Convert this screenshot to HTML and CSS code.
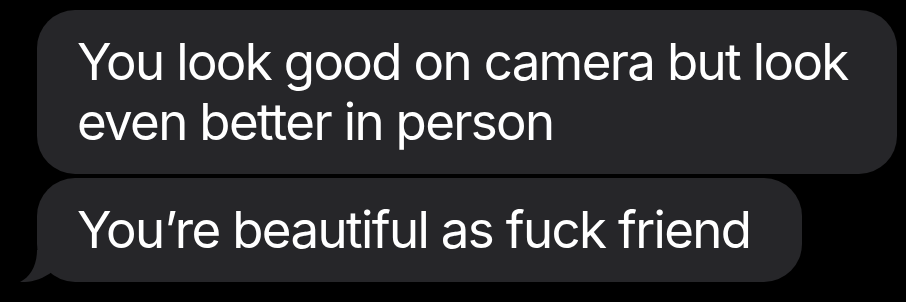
FILE: index.html
```html
<!DOCTYPE html>
<html>
<head>
<meta charset="utf-8">
<link rel="stylesheet" href="styles.css">
</head>
<body>
<div class="thread">
  <div class="bubble bubble-first">You look good on camera but look even better in person</div>
  <div class="bubble bubble-last">You’re beautiful as fuck friend<svg class="tail" width="40" height="32" viewBox="0 0 40 32"><path d="M17 0 C17 16 10 27 0 32 C10 32.5 22 30 33 21 L33 0 Z" fill="#262629"/></svg></div>
</div>
</body>
</html>
```
FILE: styles.css
```css
html, body {
  margin: 0;
  padding: 0;
  background: #000;
}
body {
  width: 906px;
  height: 302px;
  overflow: hidden;
}
.thread {
  display: flex;
  flex-direction: column;
  align-items: flex-start;
  gap: 4px;
  padding: 10px 0 0 37px;
}
.bubble {
  position: relative;
  box-sizing: border-box;
  background: #262629;
  color: #fff;
  font-family: Inter, "Noto Sans", sans-serif;
  font-size: 51px;
  line-height: 60px;
  letter-spacing: -1.65px;
  padding: 22px 40px;
  border-radius: 38px;
}
.bubble-first {
  width: 860px;
}
.bubble-last {
  width: 765px;
  white-space: nowrap;
}
.tail {
  position: absolute;
  left: -17px;
  bottom: 0;
  display: block;
}
```
